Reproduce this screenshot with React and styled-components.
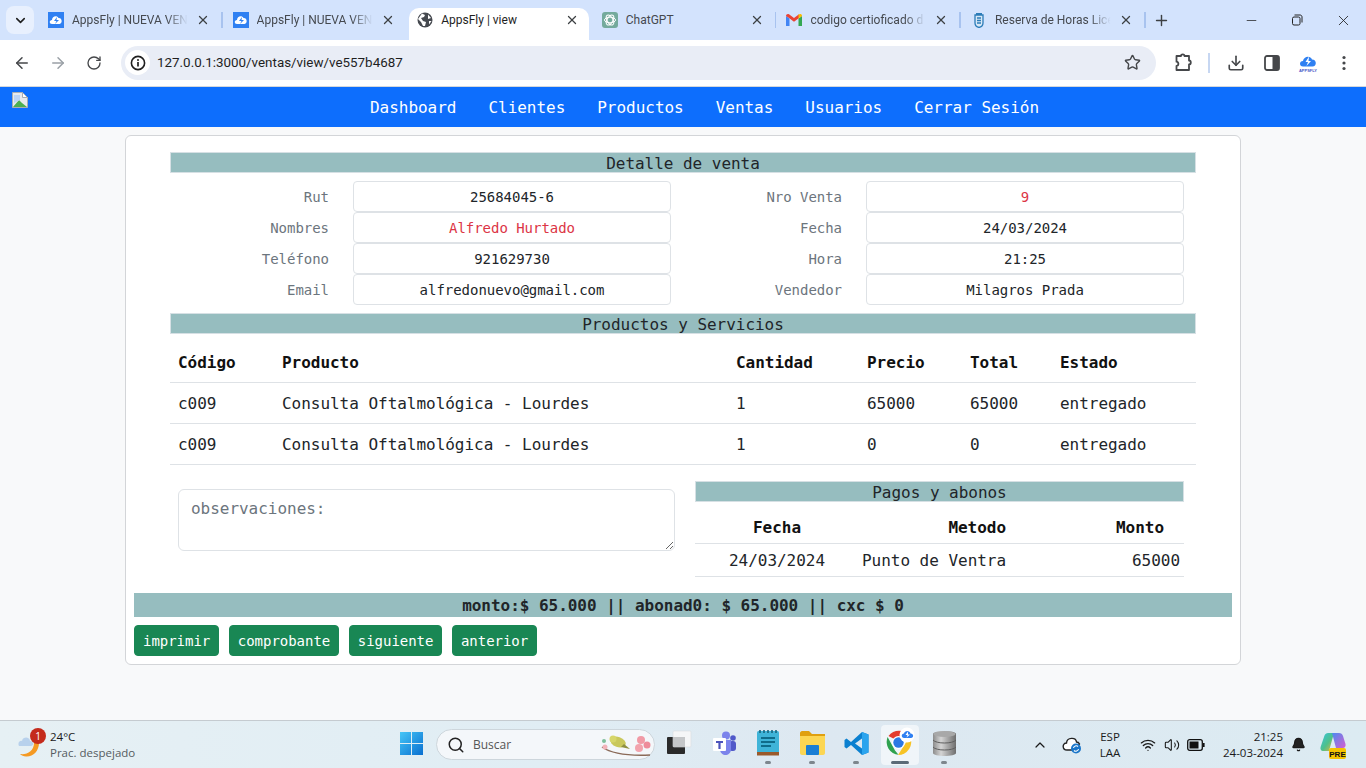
import React from 'react';
import styled, { createGlobalStyle } from 'styled-components';
import { ArrowLeft, ArrowRight, RotateCw, Star, Download, X, Plus, Minus, ChevronDown, ChevronUp, Search, Bell, Wifi, Volume2 } from 'lucide-react';

const GlobalStyle = createGlobalStyle`
  html, body { margin: 0; padding: 0; height: 100%; overflow: hidden; }
  body { font-family: "DejaVu Sans Mono", "Liberation Mono", monospace; background: #f8f9fa; color: #212529; }
  #root { height: 100vh; }
  * { box-sizing: border-box; }
`;

const UI_FONT = '"Open Sans", "Noto Sans", sans-serif';
const CHROME_FONT = 'Roboto, "Open Sans", sans-serif';

const Screen = styled.div`
  height: 768px;
  display: flex;
  flex-direction: column;
`;

/* ---- browser chrome ---- */
const TabStrip = styled.div`
  height: 40px;
  flex: none;
  background: #d3e3fd;
  display: flex;
  align-items: flex-end;
  padding-left: 6px;
  font-family: ${CHROME_FONT};
`;

const TabSearch = styled.div`
  width: 28px;
  height: 28px;
  margin: 0 6px 6px 0;
  border-radius: 8px;
  background: #e8f0fe;
  display: flex;
  align-items: center;
  justify-content: center;
  color: #1f1f1f;
`;

const Tab = styled.div`
  width: ${p => (p.$active ? '179.6px' : '184.6px')};
  margin-right: ${p => (p.$active ? '5px' : '0')};
  height: 32px;
  position: relative;
  display: flex;
  align-items: center;
  padding: 0 0 8px 8px;
  gap: 8px;
  background: ${p => (p.$active ? '#fff' : 'transparent')};
  border-radius: 10px 10px 0 0;
  color: ${p => (p.$active ? '#1f1f1f' : '#45494f')};
  &::after {
    content: '';
    display: ${p => (p.$sep ? 'block' : 'none')};
    position: absolute;
    right: 2px;
    top: 4px;
    width: 1.5px;
    height: 16px;
    background: #a8c3ef;
  }
`;

const TabTitle = styled.span`
  width: 118px;
  margin-right: -4px;
  font-size: 12px;
  white-space: nowrap;
  overflow: hidden;
  -webkit-mask-image: ${p => (p.$fade ? 'linear-gradient(90deg, #000 80%, transparent 98%)' : 'none')};
  mask-image: ${p => (p.$fade ? 'linear-gradient(90deg, #000 80%, transparent 98%)' : 'none')};
`;

const TabClose = styled.span`
  display: flex;
  margin-left: 2px;
  color: #3d4043;
`;

const NewTab = styled.div`
  width: 32px;
  height: 32px;
  margin: 0 0 4px -2px;
  display: flex;
  align-items: center;
  justify-content: center;
  color: #3d4043;
`;

const WindowControls = styled.div`
  margin-left: auto;
  align-self: stretch;
  display: flex;
  color: #222;
`;

const WindowButton = styled.div`
  width: 46px;
  display: flex;
  align-items: center;
  justify-content: center;
`;

const Toolbar = styled.div`
  height: 47px;
  flex: none;
  background: #fff;
  border-bottom: 1px solid #d5d8dc;
  display: flex;
  align-items: center;
  padding: 0 4px 1px 4px;
  font-family: ${CHROME_FONT};
`;

const ToolButton = styled.div`
  width: 36px;
  height: 36px;
  flex: none;
  display: flex;
  align-items: center;
  justify-content: center;
  color: ${p => (p.$muted ? '#9aa0a6' : '#45474a')};
`;

const Omnibox = styled.div`
  width: 1035px;
  height: 34px;
  margin: 0 9px 0 9px;
  flex: none;
  border-radius: 17px;
  background: #e9edf6;
  display: flex;
  align-items: center;
  padding: 0 15px 0 4px;
`;

const SiteInfo = styled.div`
  width: 25px;
  height: 25px;
  border-radius: 50%;
  background: #fff;
  display: flex;
  align-items: center;
  justify-content: center;
  margin-right: 7px;
`;

const Url = styled.span`
  flex: 1;
  font-size: 13.4px;
  color: #1f1f1f;
`;

const ToolDivider = styled.div`
  width: 1.5px;
  height: 20px;
  margin: 0 8.5px 0 7px;
  background: #c7d7f2;
`;

/* ---- page ---- */
const Nav = styled.nav`
  height: 40px;
  flex: none;
  background: #0d6efd;
  display: flex;
  align-items: center;
  letter-spacing: -0.03px;
`;

const LogoSlot = styled.div`
  width: 43px;
  flex: none;
  padding: 0 0 14px 12px;
  display: flex;
`;

const NavLinks = styled.div`
  flex: 1;
  display: flex;
  justify-content: center;
  gap: 32px;
`;

const NavLink = styled.a`
  color: #fff;
  font-size: 16px;
`;

const Page = styled.main`
  flex: 1;
  padding-top: 8px;
  background: #f8f9fa;
  min-height: 0;
  letter-spacing: -0.03px;
`;

const Card = styled.section`
  width: 1116px;
  margin-left: 125px;
  background: #fff;
  border: 1px solid #d3d5d8;
  border-radius: 6px;
  padding: 16px 8px 8px;
`;

const Inner = styled.div`
  margin: 0 36px;
`;

const Bar = styled.div`
  height: 21px;
  padding-top: 1px;
  line-height: 21px;
  background: #96bdbf;
  box-shadow: inset 0 0 0 1px #d6e0e4;
  text-align: center;
  font-size: 16px;
  color: #212529;
  margin-bottom: ${p => p.$after || 0}px;
`;

const FormGrid = styled.div`
  display: grid;
  grid-template-columns: 159px 318px 147px 318px;
  column-gap: 24px;
  grid-auto-rows: 31px;
  margin-bottom: 8px;
`;

const FieldLabel = styled.div`
  font-size: 14px;
  color: #6c757d;
  text-align: right;
  padding-top: 1px;
  line-height: 31px;
`;

const FieldValue = styled.div`
  height: 31px;
  line-height: 31px;
  border: 1px solid #dee2e6;
  border-radius: 4px;
  background: #fff;
  text-align: center;
  font-size: 14px;
  color: ${p => (p.$red ? '#dc3545' : '#212529')};
`;

const Table = styled.table`
  width: 100%;
  table-layout: fixed;
  border-collapse: collapse;
  font-size: 16px;
  color: #212529;
  th, td {
    padding: ${p => (p.$tight ? '5px 4px 3px' : '9px 8px 7px')};
    height: ${p => (p.$tight ? '33px' : '41px')};
    line-height: 24px;
    border-bottom: 1px solid #dee2e6;
    text-align: left;
    font-weight: 400;
    white-space: nowrap;
  }
  th {
    padding: ${p => (p.$tight ? '13px 4px 3px' : '10px 8px 6px')};
    font-weight: 700;
    color: #111;
    height: 41px;
  }
`;

const ProductTable = styled(Table)`
  margin-top: 7px;
`;

const Cell = styled.td`
  && { text-align: ${p => p.$align || 'left'}; padding-left: 0; padding-right: ${p => p.$pr || 8}px; }
`;

const Head = styled.th`
  && { text-align: ${p => p.$align || 'left'}; padding-left: 0; padding-right: ${p => p.$pr || 8}px; }
`;

const LowerRow = styled.div`
  display: flex;
  margin: 16px 12px 16px 8px;
  gap: 20px;
`;

const Notes = styled.textarea`
  width: 497px;
  height: 62px;
  flex: none;
  margin-top: 8px;
  padding: 7px 12px 5px;
  border: 1px solid #dee2e6;
  border-radius: 6px;
  background: #fff;
  font: 16px/24px "DejaVu Sans Mono", "Liberation Mono", monospace;
  letter-spacing: -0.03px;
  color: #212529;
  &::placeholder { color: #6c757d; opacity: 1; }
`;

const Payments = styled.div`
  flex: 1;
`;

const TotalBar = styled(Bar)`
  height: 24px;
  line-height: 24px;
  box-shadow: none;
  font-weight: 700;
  margin-bottom: 8px;
`;

const Actions = styled.div`
  display: flex;
  gap: 9.6px;
`;

const ActionButton = styled.button`
  height: 31px;
  padding: 0 8px;
  border: 1px solid #198754;
  border-radius: 4px;
  background: #198754;
  color: #fff;
  font: 14px "DejaVu Sans Mono", "Liberation Mono", monospace;
  letter-spacing: -0.03px;
`;

/* ---- taskbar ---- */
const Taskbar = styled.footer`
  height: 48px;
  flex: none;
  border-top: 1px solid #c5cbd0;
  background: linear-gradient(90deg, #e6f0f4 0%, #e0edf4 40%, #dde8f1 60%, #dcebf2 100%);
  display: flex;
  align-items: center;
  font-family: ${UI_FONT};
  color: #1a1a1a;
`;

const Weather = styled.div`
  width: 389px;
  flex: none;
  display: flex;
  align-items: center;
  padding-left: 18px;
  gap: 8px;
`;

const WeatherIcon = styled.div`
  position: relative;
  width: 24px;
  height: 28px;
  display: flex;
`;

const Badge = styled.span`
  position: absolute;
  top: -3px;
  left: 12px;
  width: 16px;
  height: 16px;
  border-radius: 50%;
  background: #c42b1c;
  color: #fff;
  font-size: 10px;
  line-height: 16px;
  text-align: center;
`;

const WeatherText = styled.div`
  font-size: 11.5px;
  line-height: 16px;
`;

const Muted = styled.div`
  color: #555b60;
`;

const Slot = styled.div`
  width: 44px;
  height: 44px;
  flex: none;
  position: relative;
  display: flex;
  align-items: center;
  justify-content: center;
  border-radius: 4px;
  padding-bottom: 3px;
  &::after {
    content: '';
    display: ${p => (p.$open ? 'block' : 'none')};
    position: absolute;
    left: 50%;
    bottom: 3px;
    width: ${p => (p.$active ? '18px' : '6px')};
    height: 3px;
    margin-left: ${p => (p.$active ? '-9px' : '-3px')};
    border-radius: 2px;
    background: ${p => (p.$active ? '#5b6b78' : '#7d868d')};
  }
`;

const ActiveSlot = styled(Slot)`
  &::before {
    content: '';
    position: absolute;
    inset: 2px 3px 2px 3px;
    background: rgba(255,255,255,.55);
    border-radius: 4px;
  }
  svg { position: relative; }
`;

const SearchBox = styled.div`
  width: 219px;
  height: 31px;
  margin: 0 3px 0 3px;
  flex: none;
  display: flex;
  align-items: center;
  padding-left: 10px;
  border: 1px solid #cdd6dc;
  border-radius: 16px;
  background: #f4f7fa;
  color: #555;
  font-size: 12px;
  gap: 8px;
  position: relative;
`;

const SearchArt = styled.svg`
  position: absolute;
  right: 2px;
  top: 2px;
`;

const Tray = styled.div`
  margin-left: auto;
  display: flex;
  align-items: center;
  font-size: 11.5px;
  color: #1a1a1a;
`;

const TrayIcon = styled.div`
  width: ${p => p.$w || 24}px;
  display: flex;
  justify-content: center;
`;

const Lang = styled.div`
  width: 50px;
  text-align: center;
  font-size: 11.5px;
  line-height: 16px;
`;

const Clock = styled.div`
  width: 70px;
  text-align: right;
  font-size: 11.5px;
  line-height: 16px;
  margin-left: 4px;
`;

/* ---- drawings ---- */
const AppsFlyFav = () => (
  <svg width="16" height="16" viewBox="0 0 16 16" style={{ flex: 'none' }}>
    <rect width="16" height="16" fill="#2f80f2" />
    <path d="M4 12 C1 12 1 8 4 8 C4 4 9 3 10.5 6 C14 5.5 15 11 11.5 12 Z" fill="#fff" />
    <path d="M9 5 L6 9 H8.5 L7 12 L11 8 H8.5 Z" fill="#2f80f2" />
  </svg>
);

const GlobeFav = () => (
  <svg width="16" height="16" viewBox="0 0 16 16" style={{ flex: 'none' }}>
    <circle cx="8" cy="8" r="7.5" fill="#45494f" />
    <path d="M5 1.5 L8 3 L7 5 L4 6 L6 9 L9 10 L8 14 L6 14 L4 10 L1 7 Z M11 2.5 L14 6 L11 7 Z M12 9 L14.5 9 L12 12.5 Z" fill="#fff" />
  </svg>
);

const GptFav = () => (
  <svg width="16" height="16" viewBox="0 0 16 16" style={{ flex: 'none' }}>
    <rect width="16" height="16" rx="3" fill="#74aa9c" />
    <g fill="none" stroke="#fff" strokeWidth="1">
      <ellipse cx="8" cy="8" rx="5.5" ry="2.8" />
      <ellipse cx="8" cy="8" rx="5.5" ry="2.8" transform="rotate(60 8 8)" />
      <ellipse cx="8" cy="8" rx="5.5" ry="2.8" transform="rotate(120 8 8)" />
    </g>
  </svg>
);

const GmailFav = () => (
  <svg width="16" height="16" viewBox="0 0 16 16" style={{ flex: 'none' }}>
    <path d="M0 4 V14 H3.5 V6.5 Z" fill="#4285f4" />
    <path d="M16 4 V14 H12.5 V6.5 Z" fill="#34a853" />
    <path d="M0 4 C0 2 2 1.5 3 2.3 L8 6 L13 2.3 L13 6 L8 9.7 L3 6 Z" fill="#ea4335" />
    <path d="M12.5 2.6 C14 1.5 16 2 16 4 L12.5 6.5 Z" fill="#fbbc04" />
  </svg>
);

const CrestFav = () => (
  <svg width="16" height="16" viewBox="0 0 16 16" style={{ flex: 'none' }}>
    <path d="M4 3 H12 V11 C12 13.5 10 15 8 15.5 C6 15 4 13.5 4 11 Z" fill="#d8e8f6" stroke="#2b7cb8" strokeWidth="1.3" />
    <path d="M5 1 H11 V3 H5 Z" fill="#2b7cb8" />
    <path d="M6 6 H10 M6 8.5 H10 M6 11 H10" stroke="#2b7cb8" strokeWidth="1.3" />
  </svg>
);

const BrokenImage = () => (
  <svg width="16" height="16" viewBox="0 0 16 16">
    <path d="M0.5 0.5 H10.5 L15.5 5.5 V15.5 H0.5 Z" fill="#e8eaed" stroke="#a8adb3" />
    <path d="M10.5 .5 V5.5 H15.5 Z" fill="#fff" stroke="#a8adb3" />
    <path d="M1 15 L7 8 L10 11 L15 15 Z" fill="#4caf50" />
    <path d="M2 3 H8 V8 L2 11 Z" fill="#bcd4f6" />
  </svg>
);

const InfoIcon = () => (
  <svg width="16" height="16" viewBox="0 0 16 16">
    <circle cx="8" cy="8" r="6.6" fill="none" stroke="#1f1f1f" strokeWidth="1.6" />
    <path d="M8 7 V11.5" stroke="#1f1f1f" strokeWidth="1.7" />
    <circle cx="8" cy="4.9" r="1" fill="#1f1f1f" />
  </svg>
);

const PuzzleIcon = () => (
  <svg width="20" height="20" viewBox="0 0 20 20" fill="none" stroke="#45474a" strokeWidth="1.8">
    <path d="M3.5 3 H8 C8 0.8 11.5 0.8 11.5 3 H16 V7.5 C18.4 7.5 18.4 11.5 16 11.5 V17 H3.5 V13 C6 13 6 8.7 3.5 8.7 Z" strokeLinejoin="round" />
  </svg>
);

const SidePanelIcon = () => (
  <svg width="16" height="16" viewBox="0 0 16 16">
    <rect x="1" y="1" width="14" height="14" rx="2" fill="none" stroke="#45474a" strokeWidth="1.8" />
    <rect x="8.5" y="1" width="6.5" height="14" fill="#45474a" />
  </svg>
);

const AppsFlyExt = ({ size = 20 }) => (
  <svg width={size} height={size} viewBox="0 0 20 20">
    <path d="M5 13.5 C1 13.5 1 8 5 8 C5.5 3 12.5 2 14 6.5 C19 6.5 19 13.5 14.5 13.5 Z" fill="#2f80f2" />
    <path d="M11 3.5 L7.5 9 H10 L8.5 13 L13 8 H10.5 Z" fill="#fff" />
    <text x="10" y="18.5" textAnchor="middle" fontSize="4" fontWeight="700" fill="#4a56c8" fontFamily="Liberation Sans, sans-serif">APPSFLY</text>
  </svg>
);

const MenuDots = () => (
  <svg width="16" height="16" viewBox="0 0 16 16" fill="#45474a">
    <circle cx="8" cy="2.5" r="1.6" /><circle cx="8" cy="8" r="1.6" /><circle cx="8" cy="13.5" r="1.6" />
  </svg>
);

const RestoreIcon = () => (
  <svg width="12" height="12" viewBox="0 0 12 12" fill="none" stroke="#222" strokeWidth="1">
    <rect x="1.5" y="3" width="7.5" height="8" rx="1.5" />
    <path d="M3.5 1 H9 C10.2 1 11 1.8 11 3 V8.5" />
  </svg>
);

const WeatherArt = () => (
  <svg width="24" height="28" viewBox="0 0 24 28">
    <path d="M21 12 C21 20 15 26 8 25.5 C5.5 25.3 3.5 24.3 2 23 C9 24 16 20 16 12 Z" fill="#f59a23" />
    <path d="M1 15 C-1 11 3 9 4 10 C5 5 12 6 12 10 C16 10 16 15 13 15 Z" fill="#b8d1ec" />
  </svg>
);

const WinLogo = () => (
  <svg width="25" height="25" viewBox="0 0 25 25">
    <defs>
      <linearGradient id="win" x1="0" y1="0" x2="1" y2="1">
        <stop offset="0" stopColor="#45c6f7" /><stop offset="1" stopColor="#0a6fd0" />
      </linearGradient>
    </defs>
    <path d="M1 1 H12 V12 H1 Z M13 1 H24 V12 H13 Z M1 13 H12 V24 H1 Z M13 13 H24 V24 H13 Z" fill="url(#win)" />
  </svg>
);

const BirdArt = () => (
  <SearchArt width="52" height="27" viewBox="0 0 52 27">
    <path d="M2 15 C12 22 28 24 50 23" fill="none" stroke="#8a6a58" strokeWidth="1.4" />
    <ellipse cx="18" cy="10" rx="8" ry="5" fill="#c9c85c" transform="rotate(20 18 10)" />
    <circle cx="13" cy="7" r="3.5" fill="#d6d66a" />
    <path d="M24 12 L30 17 L21 15 Z" fill="#8e8f3f" />
    <circle cx="41" cy="8" r="4" fill="#f19aa6" />
    <circle cx="47" cy="13" r="3.5" fill="#ee8b9a" />
    <circle cx="39" cy="16" r="4" fill="#f2a3ad" />
    <circle cx="5" cy="15" r="2.5" fill="#f2b2ba" />
    <circle cx="4" cy="9" r="2" fill="#7fbf9c" />
  </SearchArt>
);

const TaskView = () => (
  <svg width="26" height="26" viewBox="0 0 26 26">
    <rect x="0" y="7" width="18" height="17" rx="1" fill="#2a2a2a" />
    <rect x="6" y="1" width="18" height="16" rx="1" fill="#f5f6f7" stroke="#d8dcdf" strokeWidth=".6" />
    <rect x="6" y="7" width="12" height="10" fill="#c4c6c8" />
  </svg>
);

const Teams = () => (
  <svg width="25" height="25" viewBox="0 0 25 25">
    <circle cx="14" cy="4.5" r="4" fill="#7b83eb" />
    <circle cx="21" cy="7" r="2.8" fill="#5059c9" />
    <rect x="17" y="10" width="7" height="10" rx="3" fill="#5059c9" />
    <path d="M8 9 H19 V18 C19 22 16 24 13.5 24 C11 24 8 22 8 18 Z" fill="#7b83eb" />
    <rect x="1" y="7" width="13" height="13" rx="1" fill="#fff" />
    <path d="M4 10 H11 V12 H8.6 V18 H6.4 V12 H4 Z" fill="#4b53bc" />
  </svg>
);

const Notepad = () => (
  <svg width="24" height="28" viewBox="0 0 24 28">
    <rect x="1" y="2" width="22" height="22" rx="1.5" fill="#3fb4d8" />
    <rect x="1" y="23" width="22" height="3.5" fill="#9a5a2b" />
    <path d="M4 1 V4 M8 1 V4 M12 1 V4 M16 1 V4 M20 1 V4" stroke="#17647d" strokeWidth="1.6" />
    <path d="M5 9 H19 M5 13 H19 M5 17 H15" stroke="#0f6c8a" strokeWidth="2" />
  </svg>
);

const Folder = () => (
  <svg width="25" height="24" viewBox="0 0 25 24">
    <path d="M0 2 C0 1 1 0 2 0 H9 L12 3 H25 V8 H0 Z" fill="#e0a010" />
    <path d="M0 5 H25 V22 C25 23 24 24 23 24 H2 C1 24 0 23 0 22 Z" fill="#fcd653" />
    <rect x="6" y="14" width="13" height="10" rx="1" fill="#1a7ed4" />
  </svg>
);

const VsCode = () => (
  <svg width="25" height="25" viewBox="0 0 25 25">
    <path d="M18 1 L24.5 3.5 V21.5 L18 24 L7 14 L2.5 17.5 L0.5 16 V9 L2.5 7.5 L7 11 Z M18 7.5 L11 12.5 L18 17.5 Z" fill="#0b80d0" />
    <path d="M18 1 L24.5 3.5 V21.5 L18 24 Z" fill="#2ba4ee" />
  </svg>
);

const ChromeBadge = () => (
  <svg width="34" height="32" viewBox="0 0 34 32">
    <path d="M15 14 L5.5 9 A13 13 0 0 1 26.5 9 Z" fill="#e33b2e" />
    <path d="M4.6 10 L12 23.5 L15.5 27.8 A13 13 0 0 1 4.6 10 Z" fill="#2fa24f" />
    <path d="M27 9.5 A13 13 0 0 1 15 28 L22 17 Z" fill="#f7c325" />
    <circle cx="15.5" cy="15.5" r="6.5" fill="#fff" />
    <circle cx="15.5" cy="15.5" r="5.2" fill="#2b78e4" />
    <circle cx="24" cy="8" r="7.5" fill="#fff" />
    <path d="M21 11 C18 11 18 6.5 21 6.5 C21.5 3 27 3 27.5 6.5 C31 6.5 31 11 28 11 Z" fill="#2f80f2" />
    <path d="M25 4.5 L22.5 8 H24.5 L23.5 10.5 L27 7.5 H25 Z" fill="#fff" />
  </svg>
);

const Database = () => (
  <svg width="25" height="27" viewBox="0 0 25 27">
    <defs>
      <linearGradient id="db" x1="0" y1="0" x2="1" y2="0">
        <stop offset="0" stopColor="#8c8c8c" /><stop offset=".35" stopColor="#d4d4d4" /><stop offset="1" stopColor="#6e6e6e" />
      </linearGradient>
    </defs>
    <path d="M1 4 C1 0 24 0 24 4 V23 C24 27 1 27 1 23 Z" fill="url(#db)" />
    <ellipse cx="12.5" cy="4" rx="11" ry="3" fill="#a8a8a8" />
    <path d="M1 10 C4 14 21 14 24 10 M1 17 C4 21 21 21 24 17" fill="none" stroke="#5f5f5f" strokeWidth="1" />
  </svg>
);

const CloudSync = () => (
  <svg width="20" height="18" viewBox="0 0 20 18">
    <path d="M5 14 C0 14 0 7 4.5 7 C5 1 14 1 14.5 6 C16 6 17 7 17.5 8 L12 14 Z" fill="#fff" stroke="#222" strokeWidth="1.4" />
    <circle cx="14" cy="12.5" r="5" fill="#1b76c9" />
    <path d="M11.5 12 A2.7 2.7 0 0 1 16 10.5 M16.5 13 A2.7 2.7 0 0 1 12 14.5" fill="none" stroke="#fff" strokeWidth="1.1" />
  </svg>
);

const Battery = () => (
  <svg width="18" height="12" viewBox="0 0 18 12">
    <rect x="0.7" y="0.7" width="14.6" height="10.6" rx="2" fill="none" stroke="#111" strokeWidth="1.3" />
    <rect x="2.5" y="2.5" width="9" height="7" fill="#111" />
    <rect x="16" y="4" width="1.6" height="4" fill="#111" />
  </svg>
);

const Copilot = () => (
  <svg width="26" height="28" viewBox="0 0 26 28">
    <defs>
      <linearGradient id="cp" x1="0" y1="0" x2="1" y2="1">
        <stop offset="0" stopColor="#36c4e0" /><stop offset=".55" stopColor="#4fc08a" /><stop offset="1" stopColor="#f0b43a" />
      </linearGradient>
      <linearGradient id="cp2" x1="0" y1="0" x2="1" y2="1">
        <stop offset="0" stopColor="#4b8bf0" /><stop offset="1" stopColor="#d65fd0" />
      </linearGradient>
    </defs>
    <path d="M8 2 H14 L9 20 H3 C1 20 0 18 0.6 16 L4.5 4.5 C5 3 6.5 2 8 2 Z" fill="url(#cp)" />
    <path d="M12 2 H19 C21 2 22.5 3 23 5 L25.5 13 C26 15 25 17 23 17 H16 Z" fill="url(#cp2)" />
    <rect x="9" y="17" width="17" height="11" rx="2" fill="#f5c400" />
    <text x="17.5" y="25.5" textAnchor="middle" fontSize="8" fontWeight="700" fill="#111" fontFamily="Liberation Sans, sans-serif">PRE</text>
  </svg>
);

const tabs = [
  { id: 1, title: 'AppsFly | NUEVA VEN', icon: <AppsFlyFav />, sep: true, fade: true },
  { id: 2, title: 'AppsFly | NUEVA VEN', icon: <AppsFlyFav />, fade: true },
  { id: 3, title: 'AppsFly | view', icon: <GlobeFav />, active: true },
  { id: 4, title: 'ChatGPT', icon: <GptFav />, sep: true },
  { id: 5, title: 'codigo certioficado d', icon: <GmailFav />, sep: true, fade: true },
  { id: 6, title: 'Reserva de Horas Lice', icon: <CrestFav />, sep: true, fade: true },
];

const links = ['Dashboard', 'Clientes', 'Productos', 'Ventas', 'Usuarios', 'Cerrar Sesión'];

const fields = [
  ['Rut', '25684045-6', false, 'Nro Venta', '9', true],
  ['Nombres', 'Alfredo Hurtado', true, 'Fecha', '24/03/2024', false],
  ['Teléfono', '921629730', false, 'Hora', '21:25', false],
  ['Email', 'alfredonuevo@gmail.com', false, 'Vendedor', 'Milagros Prada', false],
];

const rows = [
  ['c009', 'Consulta Oftalmológica - Lourdes', '1', '65000', '65000', 'entregado'],
  ['c009', 'Consulta Oftalmológica - Lourdes', '1', '0', '0', 'entregado'],
];

const App = () => (
  <Screen>
    <GlobalStyle />
    <TabStrip>
      <TabSearch><ChevronDown size={15} strokeWidth={2.5} /></TabSearch>
      {tabs.map(t => (
        <Tab key={t.id} $active={t.active} $sep={t.sep}>
          {t.icon}
          <TabTitle $fade={t.fade}>{t.title}</TabTitle>
          <TabClose><X size={14} strokeWidth={2.2} /></TabClose>
        </Tab>
      ))}
      <NewTab><Plus size={17} strokeWidth={2} /></NewTab>
      <WindowControls>
        <WindowButton><Minus size={15} strokeWidth={1.2} /></WindowButton>
        <WindowButton><RestoreIcon /></WindowButton>
        <WindowButton><X size={17} strokeWidth={1.2} /></WindowButton>
      </WindowControls>
    </TabStrip>
    <Toolbar>
      <ToolButton><ArrowLeft size={18} strokeWidth={2} /></ToolButton>
      <ToolButton $muted><ArrowRight size={18} strokeWidth={2} /></ToolButton>
      <ToolButton><RotateCw size={16} strokeWidth={2} /></ToolButton>
      <Omnibox>
        <SiteInfo><InfoIcon /></SiteInfo>
        <Url>127.0.0.1:3000/ventas/view/ve557b4687</Url>
        <Star size={17} strokeWidth={2} color="#45474a" />
      </Omnibox>
      <ToolButton><PuzzleIcon /></ToolButton>
      <ToolDivider />
      <ToolButton><Download size={18} strokeWidth={2.2} /></ToolButton>
      <ToolButton><SidePanelIcon /></ToolButton>
      <ToolButton><AppsFlyExt /></ToolButton>
      <ToolButton><MenuDots /></ToolButton>
    </Toolbar>
    <Nav>
      <LogoSlot><BrokenImage /></LogoSlot>
      <NavLinks>
        {links.map(l => <NavLink key={l}>{l}</NavLink>)}
      </NavLinks>
    </Nav>
    <Page>
      <Card>
        <Inner>
          <Bar $after={8}>Detalle de venta</Bar>
          <FormGrid>
            {fields.map(f => (
              <React.Fragment key={f[0]}>
                <FieldLabel>{f[0]}</FieldLabel>
                <FieldValue $red={f[2]}>{f[1]}</FieldValue>
                <FieldLabel>{f[3]}</FieldLabel>
                <FieldValue $red={f[5]}>{f[4]}</FieldValue>
              </React.Fragment>
            ))}
          </FormGrid>
          <Bar>Productos y Servicios</Bar>
          <ProductTable>
            <colgroup>
              <col width="104" /><col width="454" /><col width="131" /><col width="103" /><col width="90" /><col width="144" />
            </colgroup>
            <thead>
              <tr>
                {['Código', 'Producto', 'Cantidad', 'Precio', 'Total', 'Estado'].map(h => <th key={h}>{h}</th>)}
              </tr>
            </thead>
            <tbody>
              {rows.map((r, i) => (
                <tr key={i}>{r.map((c, j) => <td key={j}>{c}</td>)}</tr>
              ))}
            </tbody>
          </ProductTable>
          <LowerRow>
            <Notes placeholder="observaciones:" />
            <Payments>
              <Bar $after={1}>Pagos y abonos</Bar>
              <Table $tight>
                <colgroup>
                  <col width="167" /><col width="152" /><col width="170" />
                </colgroup>
                <thead>
                  <tr>
                    <Head $align="center" $pr={3}>Fecha</Head>
                    <Head $align="right">Metodo</Head>
                    <Head $align="right" $pr={20}>Monto</Head>
                  </tr>
                </thead>
                <tbody>
                  <tr>
                    <Cell $align="center" $pr={3}>24/03/2024</Cell>
                    <Cell $align="right">Punto de Ventra</Cell>
                    <Cell $align="right" $pr={4}>65000</Cell>
                  </tr>
                </tbody>
              </Table>
            </Payments>
          </LowerRow>
        </Inner>
        <TotalBar>monto:$ 65.000 || abonad0: $ 65.000 || cxc $ 0</TotalBar>
        <Actions>
          {['imprimir', 'comprobante', 'siguiente', 'anterior'].map(b => <ActionButton key={b}>{b}</ActionButton>)}
        </Actions>
      </Card>
    </Page>
    <Taskbar>
      <Weather>
        <WeatherIcon><WeatherArt /><Badge>1</Badge></WeatherIcon>
        <WeatherText>
          <div>24°C</div>
          <Muted>Prac. despejado</Muted>
        </WeatherText>
      </Weather>
      <Slot><WinLogo /></Slot>
      <SearchBox>
        <Search size={18} strokeWidth={2} color="#222" />
        Buscar
        <BirdArt />
      </SearchBox>
      <Slot><TaskView /></Slot>
      <Slot><Teams /></Slot>
      <Slot $open><Notepad /></Slot>
      <Slot $open><Folder /></Slot>
      <Slot $open><VsCode /></Slot>
      <ActiveSlot $open $active><ChromeBadge /></ActiveSlot>
      <Slot $open><Database /></Slot>
      <Tray>
        <TrayIcon $w={38}><ChevronUp size={16} strokeWidth={1.8} /></TrayIcon>
        <TrayIcon $w={26}><CloudSync /></TrayIcon>
        <Lang>ESP<br />LAA</Lang>
        <TrayIcon $w={26}><Wifi size={16} strokeWidth={2} /></TrayIcon>
        <TrayIcon $w={22}><Volume2 size={16} strokeWidth={1.6} /></TrayIcon>
        <TrayIcon $w={26}><Battery /></TrayIcon>
        <Clock>21:25<br />24-03-2024</Clock>
        <TrayIcon $w={30}><Bell size={15} fill="#222" strokeWidth={2} /></TrayIcon>
        <TrayIcon $w={40}><Copilot /></TrayIcon>
        <TrayIcon $w={13} />
      </Tray>
    </Taskbar>
  </Screen>
);

export default App;
